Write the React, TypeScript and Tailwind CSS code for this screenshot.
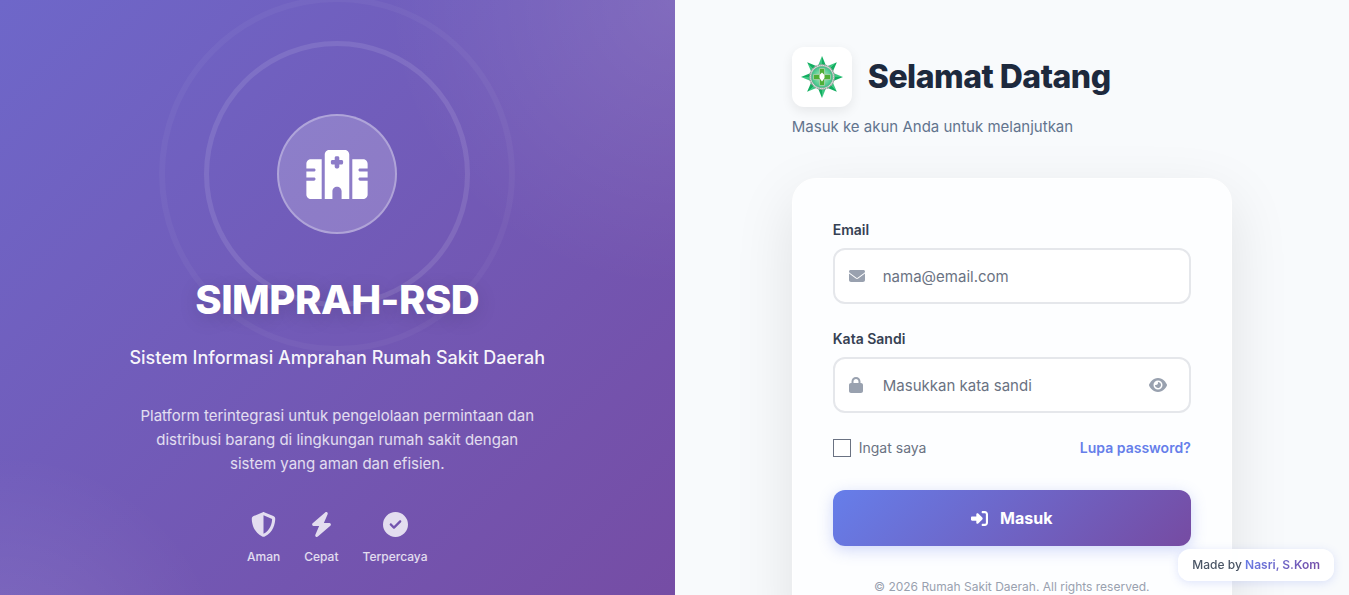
import React, { useState } from 'react';
import {
  FaBolt,
  FaCircleCheck,
  FaEnvelope,
  FaEye,
  FaHospital,
  FaLock,
  FaRightToBracket,
  FaShieldHalved,
} from 'react-icons/fa6';

const features = [
  { icon: FaShieldHalved, label: 'Aman' },
  { icon: FaBolt, label: 'Cepat' },
  { icon: FaCircleCheck, label: 'Terpercaya' },
];

const rays = [0, 45, 90, 135, 180, 225, 270, 315];

const Logo: React.FC = () => (
  <svg viewBox="0 0 44 44" className="w-11 h-11" role="img" aria-label="Logo">
    <defs>
      <linearGradient id="ray" x1="0" x2="1">
        <stop offset="0.5" stopColor="#3cc882" />
        <stop offset="0.5" stopColor="#12ad60" />
      </linearGradient>
      <radialGradient id="core">
        <stop offset="0" stopColor="#ffffff" />
        <stop offset="0.35" stopColor="#8fe0ae" />
        <stop offset="1" stopColor="#3cc287" />
      </radialGradient>
    </defs>
    {rays.map((angle) => (
      <path
        key={angle}
        d="M22 1L26.5 12H17.5Z"
        fill="url(#ray)"
        transform={`rotate(${angle} 22 22)`}
      />
    ))}
    <circle cx="22" cy="22" r="12.2" fill="#f1f5f3" stroke="#9aa19e" strokeWidth="1.4" strokeDasharray="1.6 0.5" />
    <circle cx="22" cy="22" r="10.8" fill="url(#core)" stroke="#7d9a8b" strokeWidth="0.6" />
    <path d="M19.5 13.500h5v6h6v5h-6v6h-5v-6h-6v-5h6z" fill="#4fae35" stroke="#a9cfae" strokeWidth="0.8" />
    <path d="M22 17.500l2.500 2.500v3l-2.500 3.500-2.500-3.500v-3z" fill="#ffffff" />
  </svg>
);

const BrandPanel: React.FC = () => (
  <section className="relative overflow-hidden flex flex-col items-center justify-center px-12 text-center text-white bg-[radial-gradient(circle_at_100%_0%,rgba(255,255,255,0.11)_0%,transparent_30%),radial-gradient(circle_at_0%_100%,rgba(255,255,255,0.10)_0%,transparent_24%),linear-gradient(135deg,#6e67c9_0%,#764ba2_100%)]">
    <div className="relative w-30 h-30 mb-10">
      <span className="absolute -inset-[73px] rounded-full border-5 border-white/10" />
      <span className="absolute -inset-[118px] rounded-full border-6 border-white/4" />
      <div className="w-full h-full rounded-full border-2 border-white/30 bg-white/20 flex items-center justify-center">
        <FaHospital className="w-[62px] h-[49px]" />
      </div>
    </div>
    <h1 className="relative text-[40px] leading-[52px] font-extrabold tracking-[-0.5px] mb-4 [text-shadow:0_4px_20px_rgba(0,0,0,0.15)]">
      SIMPRAH-RSD
    </h1>
    <p className="relative text-lg leading-8 font-medium text-white/95 mb-[30px]">
      Sistem Informasi Amprahan Rumah Sakit Daerah
    </p>
    <p className="max-w-[400px] text-[15px] leading-6 text-white/80 mb-9">
      Platform terintegrasi untuk pengelolaan permintaan dan distribusi barang di lingkungan rumah sakit dengan
      sistem yang aman dan efisien.
    </p>
    <ul className="flex gap-6 text-white/80">
      {features.map(({ icon: Icon, label }) => (
        <li key={label} className="flex flex-col items-center gap-2">
          <Icon className="w-[25px] h-[25px]" />
          <span className="text-xs leading-6 font-medium">{label}</span>
        </li>
      ))}
    </ul>
  </section>
);

const inputClass =
  'w-full h-14 pl-12 pr-12 rounded-xl border-2 border-gray-200 bg-white text-[15px] text-gray-800 placeholder:text-gray-500 outline-none focus:border-[#667eea]';

const LoginPanel: React.FC = () => {
  const [showPassword, setShowPassword] = useState(false);

  return (
    <section className="flex flex-col items-center justify-center px-6 pt-[47px] pb-[46px] bg-[#f8fafc]">
      <div className="w-full max-w-[440px]">
        <header className="mb-10">
          <div className="flex items-center gap-4 mb-2">
            <div className="w-15 h-15 rounded-xl bg-white flex items-center justify-center shadow-[0_4px_12px_rgba(0,0,0,0.08)]">
              <Logo />
            </div>
            <h2 className="text-[32px] leading-10 font-extrabold tracking-[-0.5px] text-slate-800">Selamat Datang</h2>
          </div>
          <p className="text-[15px] leading-[23px] text-slate-500">Masuk ke akun Anda untuk melanjutkan</p>
        </header>

        <form
          onSubmit={(e) => e.preventDefault()}
          className="rounded-3xl border border-white bg-[#fdfeff] p-10 shadow-[0_20px_60px_rgba(0,0,0,0.1)]"
        >
          <label htmlFor="email" className="block text-sm leading-[21px] font-semibold text-gray-700 mb-2">
            Email
          </label>
          <div className="relative mb-6">
            <FaEnvelope className="absolute left-4 top-5 w-4 h-4 text-gray-400" />
            <input id="email" type="email" placeholder="nama@email.com" className={inputClass} />
          </div>

          <label htmlFor="password" className="block text-sm leading-[21px] font-semibold text-gray-700 mb-2">
            Kata Sandi
          </label>
          <div className="relative mb-6">
            <FaLock className="absolute left-4 top-5 w-[14px] h-4 text-gray-400" />
            <input
              id="password"
              type={showPassword ? 'text' : 'password'}
              placeholder="Masukkan kata sandi"
              className={inputClass}
            />
            <button
              type="button"
              aria-label="Tampilkan kata sandi"
              onClick={() => setShowPassword(!showPassword)}
              className="absolute right-4 top-3 p-2 text-gray-400"
            >
              <FaEye className="w-[18px] h-4" />
            </button>
          </div>

          <div className="flex items-center justify-between text-sm leading-[21px] mb-8">
            <label className="flex items-center gap-2 text-gray-500">
              <input
                type="checkbox"
                className="appearance-none w-[18px] h-[18px] border border-gray-500 bg-white checked:bg-[#667eea]"
              />
              Ingat saya
            </label>
            <a href="#" className="font-semibold text-[#667eea]">
              Lupa password?
            </a>
          </div>

          <button
            type="submit"
            className="w-full h-14 rounded-xl flex items-center justify-center gap-3 text-base font-bold text-white bg-[linear-gradient(135deg,#667eea_0%,#764ba2_100%)] shadow-[0_4px_15px_rgba(102,126,234,0.3)]"
          >
            <FaRightToBracket className="w-[17px] h-[17px]" />
            Masuk
          </button>

          <p className="mt-8 text-xs leading-[18px] text-center text-gray-400">
            © 2026 Rumah Sakit Daerah. All rights reserved.
          </p>
        </form>
      </div>
    </section>
  );
};

const App: React.FC = () => {
  return (
    <main className="min-h-screen grid grid-cols-2 font-['Inter',sans-serif]">
      <BrandPanel />
      <LoginPanel />
      <div className="fixed right-[15px] bottom-[14px] rounded-xl bg-white/95 px-[14px] py-[7px] text-xs leading-[18px] font-medium text-gray-600 shadow-[0_2px_10px_rgba(102,126,234,0.2)]">
        Made by{' '}
        <span className="font-semibold text-transparent bg-clip-text bg-[linear-gradient(135deg,#667eea_0%,#764ba2_100%)]">
          Nasri, S.Kom
        </span>
      </div>
    </main>
  );
};

export default App;
